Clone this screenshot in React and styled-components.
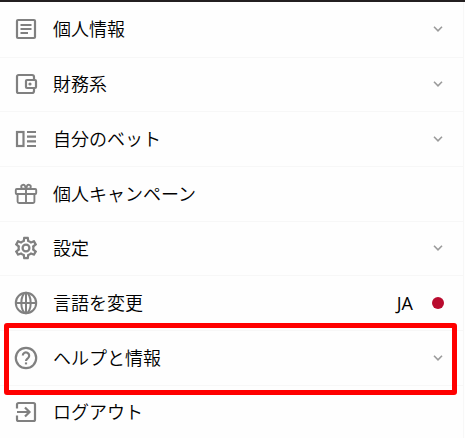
import React from "react";
import styled, { createGlobalStyle } from "styled-components";

const GlobalStyle = createGlobalStyle`
  body {
    margin: 0;
    background: #fefefe;
    overflow: hidden;
  }
`;

const MenuWrapper = styled.nav`
  position: relative;
  box-sizing: border-box;
  width: 465px;
  height: 438px;
  overflow: hidden;
  border-top: 2px solid #231f20;
  background: #fefefe;
  font-family: "Open Sans", "Noto Sans CJK JP", sans-serif;
  color: #000;
`;

const MenuList = styled.ul`
  width: 464px;
  box-sizing: border-box;
  margin: 0;
  padding: 1px 0 0;
  border-right: 1px solid #f7f7f7;
  list-style: none;
`;

const MenuItem = styled.li`
  display: flex;
  align-items: center;
  box-sizing: border-box;
  height: 54.67px;
  padding: 0 19px 0 14px;
  border-bottom: 1px solid #f7f7f7;

  &:first-child {
    padding-bottom: 1px;
  }
`;

const ItemIcon = styled.svg`
  flex: none;
  width: 24px;
  height: 24px;
  margin-right: 15px;
  fill: none;
  stroke: #808080;
  stroke-width: 2.2;
`;

const Label = styled.span`
  flex: 1;
  padding-bottom: 2px;
  font-family: "Noto Sans CJK JP", sans-serif;
  font-size: 18px;
  font-weight: 350;
  line-height: 26px;
  white-space: nowrap;
`;

const LanguageCode = styled.span`
  margin-right: 19px;
  padding-bottom: 1px;
  font-size: 18px;
  line-height: 26px;
`;

const FlagDot = styled.span`
  width: 12px;
  height: 12px;
  margin-bottom: 1px;
  border-radius: 50%;
  background: #b90b2e;
`;

const Chevron = styled.svg`
  width: 10px;
  height: 6px;
  margin-right: 1px;
  fill: none;
  stroke: #9b9b9b;
  stroke-width: 1.6;
`;

/* Frame drawn over the help row */
const Highlight = styled.div`
  position: absolute;
  top: 321px;
  left: 4px;
  box-sizing: border-box;
  width: 453px;
  height: 72px;
  border: 5px solid #ff0000;
  border-radius: 3px;
  pointer-events: none;
`;

const icons = {
  profile: (
    <>
      <rect x="3" y="3" width="18" height="18" rx="1" />
      <path d="M6.5 8h11M6.5 12h11M6.5 16h7.5" />
    </>
  ),
  wallet: (
    <>
      <path d="M20 8V5a2 2 0 0 0-2-2H4.500A1.500 1.500 0 0 0 3 4.500v15A1.500 1.500 0 0 0 4.500 21H18a2 2 0 0 0 2-2v-3" />
      <rect x="12" y="8" width="10" height="8" rx="1" />
      <circle cx="16" cy="12" r="1.6" fill="#808080" stroke="none" />
    </>
  ),
  bets: (
    <>
      <rect x="3" y="5" width="6.500" height="14" />
      <path d="M13 5h9M13 9.700h9M13 14.300h9M13 19h9" />
    </>
  ),
  gift: (
    <g strokeWidth="1.900">
      <rect x="1.800" y="7" width="20.400" height="5" rx="1" />
      <path d="M3.600 12v7.500a1.500 1.500 0 0 0 1.500 1.500h13.800a1.500 1.500 0 0 0 1.500-1.500V12M12 7v14M12 6.800H9.200a2 2 0 1 1 1.900-2.700L12 6.800l.9-2.700a2 2 0 1 1 1.900 2.700z" />
    </g>
  ),
  settings: (
    <path
      fill="#808080"
      stroke="none"
      transform="translate(-1.600 -1.600) scale(1.133)"
      d="M19.430 12.980c.04-.32.07-.64.07-.98s-.03-.66-.07-.98l2.110-1.650c.19-.15.24-.42.12-.64l-2-3.460a.5.5 0 0 0-.61-.22l-2.490 1c-.52-.4-1.080-.73-1.690-.98l-.38-2.650A.488.488 0 0 0 14 2h-4c-.25 0-.46.18-.49.42l-.38 2.650c-.61.25-1.170.59-1.690.98l-2.490-1a.5.5 0 0 0-.61.22l-2 3.460c-.13.22-.07.49.12.64l2.110 1.650c-.04.32-.07.65-.07.98s.03.66.07.98l-2.110 1.650c-.19.15-.24.42-.12.64l2 3.460c.12.22.39.3.61.22l2.490-1c.52.4 1.080.73 1.690.98l.38 2.650c.03.24.24.42.49.42h4c.25 0 .46-.18.49-.42l.38-2.650c.61-.25 1.170-.59 1.690-.98l2.490 1c.23.09.49 0 .61-.22l2-3.460a.5.5 0 0 0-.12-.64l-2.110-1.650zm-1.980-1.710c.04.31.05.52.05.73s-.02.43-.05.73l-.14 1.130.89.7 1.080.84-.7 1.210-1.270-.51-1.040-.42-.9.68c-.43.32-.84.56-1.250.73l-1.060.43-.16 1.130-.2 1.350h-1.400l-.19-1.350-.16-1.130-1.060-.43c-.43-.18-.83-.41-1.230-.71l-.91-.7-1.060.43-1.270.51-.7-1.210 1.080-.84.89-.7-.14-1.130c-.03-.31-.05-.54-.05-.74s.02-.43.05-.73l.14-1.130-.89-.7-1.080-.84.7-1.210 1.270.51 1.040.42.9-.68c.43-.32.84-.56 1.250-.73l1.060-.43.16-1.130.2-1.350h1.390l.19 1.350.16 1.130 1.060.43c.43.18.83.41 1.230.71l.91.7 1.060-.43 1.270-.51.7 1.210-1.070.85-.89.7.14 1.130zM12 8a4 4 0 1 0 0 8 4 4 0 0 0 0-8zm0 6a2 2 0 1 1 0-4 2 2 0 0 1 0 4z"
    />
  ),
  language: (
    <g strokeWidth="2">
      <circle cx="12" cy="12" r="10.200" />
      <ellipse cx="12" cy="12" rx="4.700" ry="10.200" />
      <path d="M2 12h20M12 2v20" />
    </g>
  ),
  help: (
    <>
      <circle cx="12" cy="12" r="10.200" />
      <path d="M8.800 9.600a3.200 3.200 0 1 1 5.300 2.400C12.800 13 12 13.400 12 15" />
      <path d="M12 16.400v2" />
    </>
  ),
  logout: (
    <path d="M3 8.500V4.500A1.500 1.500 0 0 1 4.500 3h15A1.500 1.500 0 0 1 21 4.500v15a1.500 1.500 0 0 1-1.500 1.500h-15A1.500 1.500 0 0 1 3 19.500v-4M3 12h12.500M11 7.500l4.500 4.500-4.500 4.500" />
  ),
};

const menuItems = [
  { icon: "profile", label: "個人情報", expandable: true },
  { icon: "wallet", label: "財務系", expandable: true },
  { icon: "bets", label: "自分のベット", expandable: true },
  { icon: "gift", label: "個人キャンペーン" },
  { icon: "settings", label: "設定", expandable: true },
  { icon: "language", label: "言語を変更", language: "JA" },
  { icon: "help", label: "ヘルプと情報", expandable: true },
  { icon: "logout", label: "ログアウト" },
];

const App = () => {
  return (
    <MenuWrapper>
      <GlobalStyle />
      <MenuList>
        {menuItems.map(({ icon, label, expandable, language }) => (
          <MenuItem key={icon}>
            <ItemIcon viewBox="0 0 24 24">{icons[icon]}</ItemIcon>
            <Label>{label}</Label>
            {language && (
              <>
                <LanguageCode>{language}</LanguageCode>
                <FlagDot />
              </>
            )}
            {expandable && (
              <Chevron viewBox="0 0 10 6">
                <path d="M1 .8l4 4 4-4" />
              </Chevron>
            )}
          </MenuItem>
        ))}
      </MenuList>
      <Highlight />
    </MenuWrapper>
  );
};

export default App;
